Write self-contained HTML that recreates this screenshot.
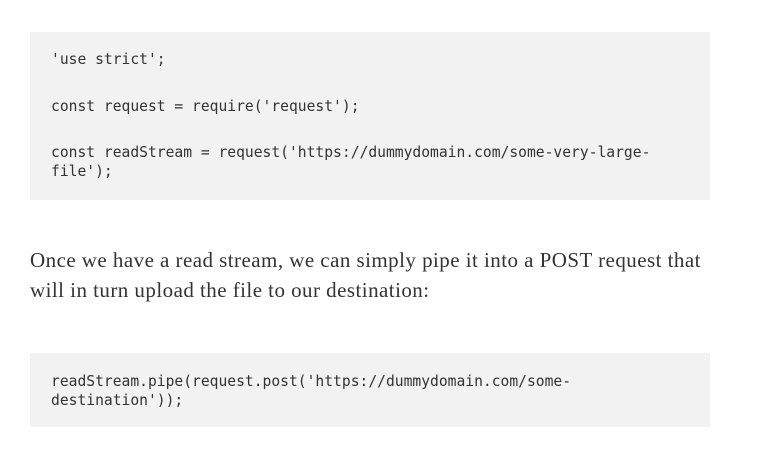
<!DOCTYPE html>
<html><head><style>
body{margin:0;background:#fff;width:768px;height:451px;position:relative;overflow:hidden}
.cb{position:absolute;left:30px;width:680px;background:#f2f2f2}
.l{position:absolute;left:21px;font-family:"DejaVu Sans Mono","Liberation Mono",monospace;font-size:14.65px;line-height:19px;color:#333;white-space:pre}
.p{position:absolute;left:30px;width:720px;font-family:"Liberation Serif",serif;font-size:21px;letter-spacing:0.45px;line-height:30px;color:#333;white-space:nowrap}
</style></head><body>
<div class="cb" style="top:32px;height:168px">
<div class="l" style="top:18px">'use strict';</div>
<div class="l" style="top:65px">const request = require('request');</div>
<div class="l" style="top:111px">const readStream = request('https://dummydomain.com/some-very-large-
file');</div>
</div>
<div class="p" style="top:245px">Once we have a read stream, we can simply pipe it into a POST request that<br>will in turn upload the file to our destination:</div>
<div class="cb" style="top:353px;height:74px">
<div class="l" style="top:19px">readStream.pipe(request.post('https://dummydomain.com/some-
destination'));</div>
</div>
</body></html>
